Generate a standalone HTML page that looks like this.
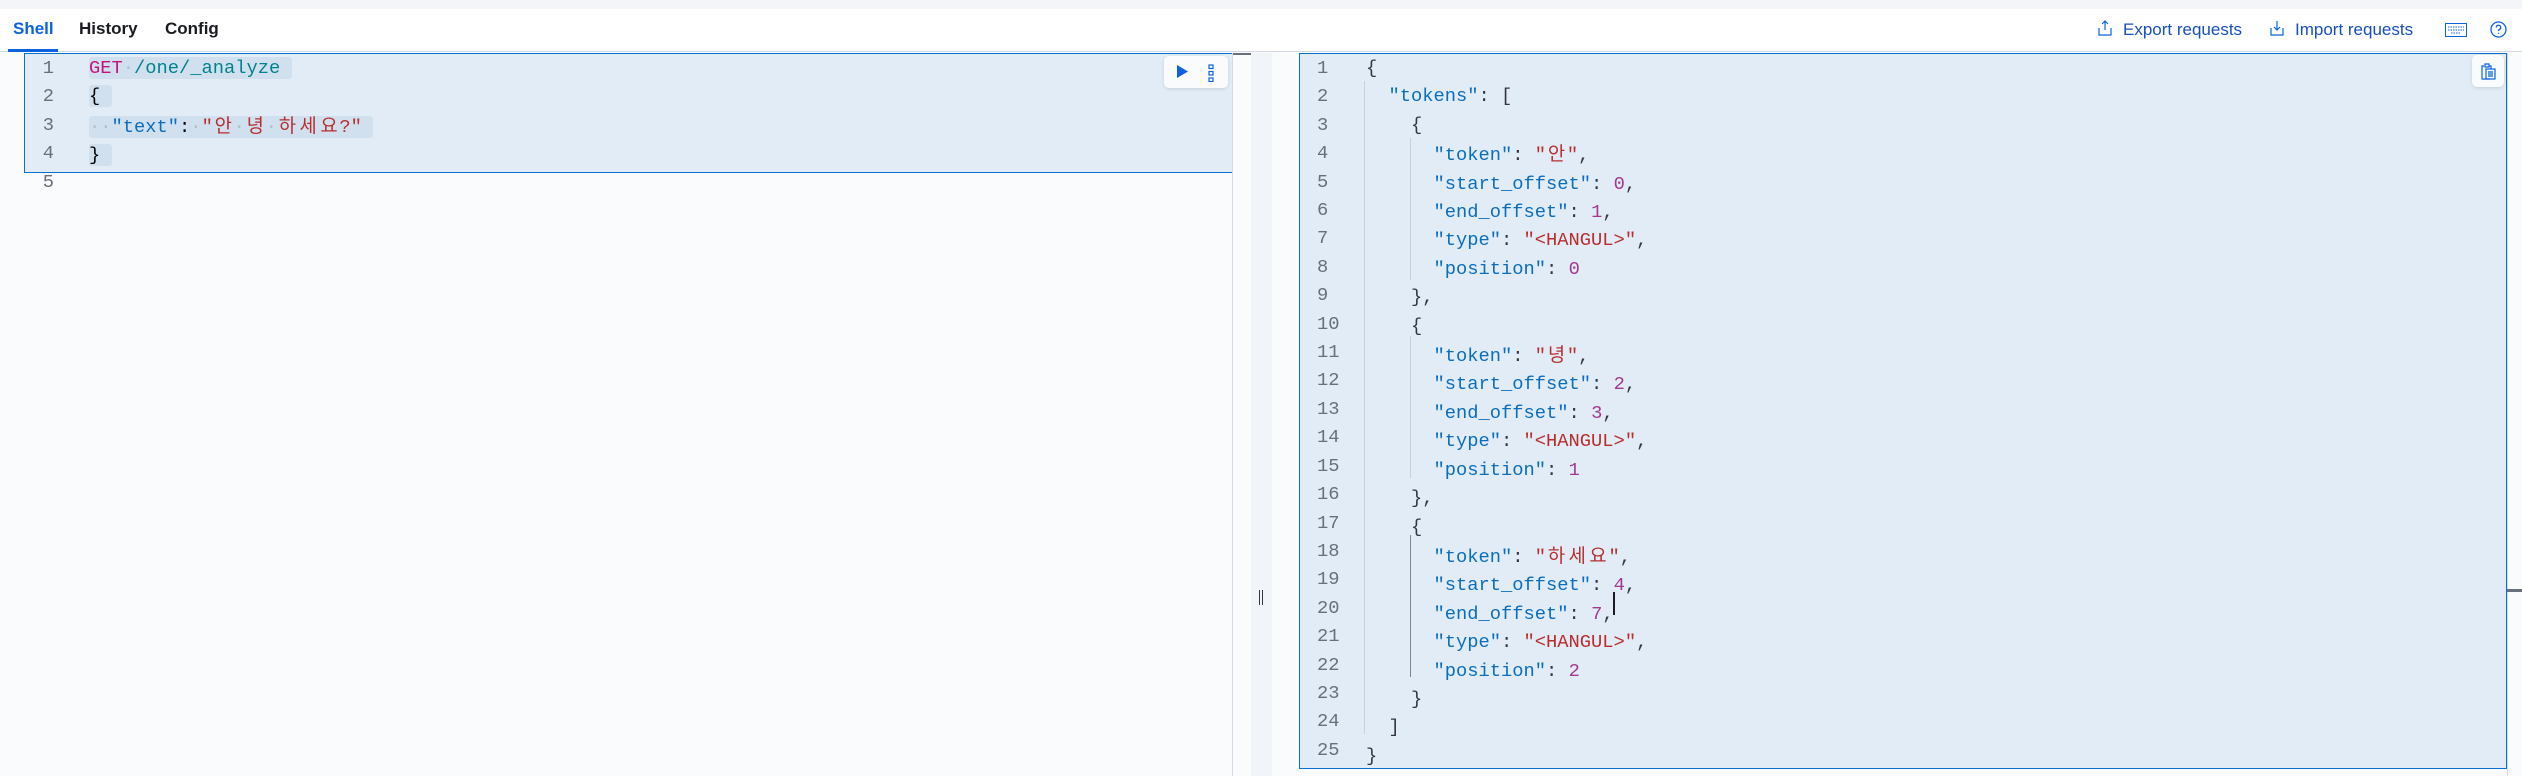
<!DOCTYPE html>
<html><head><meta charset="utf-8"><style>
*{margin:0;padding:0;box-sizing:border-box}
body{width:2522px;height:776px;overflow:hidden;background:#fafbfd;font-family:"Liberation Sans",sans-serif;position:relative}
.a{position:absolute}
.top{left:0;top:0;width:2522px;height:9px;background:#f3f5f9}
.hdr{left:0;top:9px;width:2522px;height:43px;background:#fff;border-bottom:1px solid #d3dae6}
.tab{top:19px;font-size:17px;font-weight:bold;color:#1a1c21}
.mono{font-family:"Liberation Mono","Noto Sans CJK KR",monospace;white-space:pre}
.ln{color:#69707d;text-align:right}
.k{display:inline-block;width:2ch;text-align:center;font-family:"Noto Sans CJK KR",sans-serif}
.key{color:#0a6dbd}.str{color:#b92d2d}.num{color:#a3388f}.dot{color:#b6bec9}
.hl{background:#d0e0ee;border-radius:3px}
</style></head><body>
<div class="a top"></div>
<div class="a hdr"></div>
<div class="a tab" style="left:13px;color:#0b64dd">Shell</div>
<div class="a" style="left:8px;top:49px;width:50px;height:3px;background:#0b64dd"></div>
<div class="a tab" style="left:79px">History</div>
<div class="a tab" style="left:165px">Config</div>

<svg class="a" style="left:2097px;top:20px" width="16" height="16" viewBox="0 0 16 16" fill="none" stroke="#0b64dd" stroke-width="1.2"><path d="M8 1v9M5 4l3-3 3 3M2 8v7h12V8"/></svg>
<div class="a" style="left:2123px;top:20px;font-size:17px;color:#1750ba">Export requests</div>
<svg class="a" style="left:2269px;top:20px" width="16" height="16" viewBox="0 0 16 16" fill="none" stroke="#0b64dd" stroke-width="1.2"><path d="M8 1v9M5 7l3 3 3-3M2 8v7h12V8"/></svg>
<div class="a" style="left:2295px;top:20px;font-size:17px;color:#1750ba">Import requests</div>
<svg class="a" style="left:2445px;top:23px" width="22" height="14" viewBox="0 0 22 14"><rect x="0.5" y="0.5" width="21" height="13" fill="none" stroke="#0b64dd"/><path d="M3 4h16M3 7h16M6 10h10" stroke="#0b64dd" stroke-dasharray="1.5 1"/></svg>
<svg class="a" style="left:2490px;top:21px" width="17" height="17" viewBox="0 0 17 17" fill="none" stroke="#0b64dd" stroke-width="1.3"><circle cx="8.5" cy="8.5" r="7.5"/><path d="M6.3 6.5a2.2 2.2 0 1 1 3 2c-.6.3-.8.7-.8 1.5M8.5 11.7v1.2"/></svg>

<!-- left editor -->
<div class="a" style="left:24px;top:53px;width:1209px;height:120px;background:#e1ecf6;border:1.5px solid #0b6fd0"></div>
<div class="a" style="left:1232px;top:53px;width:1px;height:723px;background:#d3dae6"></div>
<div class="a" style="left:1233px;top:53px;width:18px;height:2px;background:#69707d"></div>
<div class="a" style="left:1251px;top:53px;width:21px;height:723px;background:#f1f4f9"></div>
<div class="a" style="left:1259px;top:590px;width:1px;height:15px;background:#343741"></div>
<div class="a" style="left:1262px;top:590px;width:1px;height:15px;background:#343741"></div>

<div class="a mono ln" style="left:20px;top:54px;width:34px;font-size:18.75px;line-height:28.4px">1
2
3
4
5</div>
<div class="a mono" style="left:89px;top:54px;font-size:18.75px;line-height:28.4px"><span class="hl"><span style="color:#c4137a">GET</span><span class="dot">·</span><span style="color:#00838f">/one/_analyze</span> </span>
<span class="hl">{ </span>
<span class="hl"><span class="dot">··</span><span class="key">"text"</span>:<span class="dot">·</span><span class="str">"<span class="k">안</span><span class="dot">·</span><span class="k">녕</span><span class="dot">·</span><span class="k">하</span><span class="k">세</span><span class="k">요</span>?"</span> </span>
<span class="hl">} </span></div>
<div class="a" style="left:1164px;top:56px;width:64px;height:32px;background:#fafbfd;border-radius:5px;box-shadow:0 1px 3px rgba(0,0,0,.12)"></div>
<svg class="a" style="left:1177px;top:65px" width="11" height="13"><path d="M0 0L11 6.5L0 13Z" fill="#0b64dd"/></svg>
<svg class="a" style="left:1208px;top:64px" width="7" height="18" fill="none" stroke="#0b64dd" stroke-width="1.2"><rect x="1" y="1" width="4" height="3.5"/><rect x="1" y="7.5" width="4" height="3.5"/><rect x="1" y="14" width="4" height="3.5"/></svg>

<!-- right editor -->
<div class="a" style="left:1299px;top:53px;width:1208px;height:716px;background:#e1ecf6;border:1.5px solid #0b6fd0"></div>
<div class="a" style="left:2507px;top:53px;width:1px;height:723px;background:#d3dae6"></div>
<div class="a" style="left:2507px;top:589px;width:15px;height:3px;background:#69707d"></div>
<div class="a" style="left:1364px;top:81px;width:1px;height:653px;background:#c3d0e0"></div>
<div class="a" style="left:1410px;top:138px;width:1px;height:142px;background:#c3d0e0"></div>
<div class="a" style="left:1410px;top:336px;width:1px;height:142px;background:#c3d0e0"></div>
<div class="a" style="left:1410px;top:535px;width:1px;height:142px;background:#7c8594"></div>
<div class="a" style="left:1613px;top:592px;width:2px;height:23px;background:#1a1c21"></div>
<div class="a mono ln" style="left:1300px;top:54px;width:30px;font-size:18.75px;line-height:28.4px;text-align:left;padding-left:17px">1
2
3
4
5
6
7
8
9
10
11
12
13
14
15
16
17
18
19
20
21
22
23
24
25</div>
<div class="a mono" style="left:1366px;top:54px;font-size:18.75px;line-height:28.4px;color:#343741">{
  <span class="key">"tokens"</span>: [
    {
      <span class="key">"token"</span>: <span class="str">"<span class="k">안</span>"</span>,
      <span class="key">"start_offset"</span>: <span class="num">0</span>,
      <span class="key">"end_offset"</span>: <span class="num">1</span>,
      <span class="key">"type"</span>: <span class="str">"&lt;HANGUL&gt;"</span>,
      <span class="key">"position"</span>: <span class="num">0</span>
    },
    {
      <span class="key">"token"</span>: <span class="str">"<span class="k">녕</span>"</span>,
      <span class="key">"start_offset"</span>: <span class="num">2</span>,
      <span class="key">"end_offset"</span>: <span class="num">3</span>,
      <span class="key">"type"</span>: <span class="str">"&lt;HANGUL&gt;"</span>,
      <span class="key">"position"</span>: <span class="num">1</span>
    },
    {
      <span class="key">"token"</span>: <span class="str">"<span class="k">하</span><span class="k">세</span><span class="k">요</span>"</span>,
      <span class="key">"start_offset"</span>: <span class="num">4</span>,
      <span class="key">"end_offset"</span>: <span class="num">7</span>,
      <span class="key">"type"</span>: <span class="str">"&lt;HANGUL&gt;"</span>,
      <span class="key">"position"</span>: <span class="num">2</span>
    }
  ]
}</div>
<div class="a" style="left:2472px;top:55px;width:32px;height:32px;background:#fafbfd;border-radius:5px;box-shadow:0 1px 3px rgba(0,0,0,.12)"></div>
<svg class="a" style="left:2481px;top:63px" width="15" height="17" fill="none" stroke="#0b64dd" stroke-width="1.2"><path d="M3 3H1v13h8M4 1h4v3H4zM8 3h2v3"/><rect x="5" y="6" width="9" height="10"/><path d="M7 9h5M7 11h5M7 13h5"/></svg>
</body></html>
